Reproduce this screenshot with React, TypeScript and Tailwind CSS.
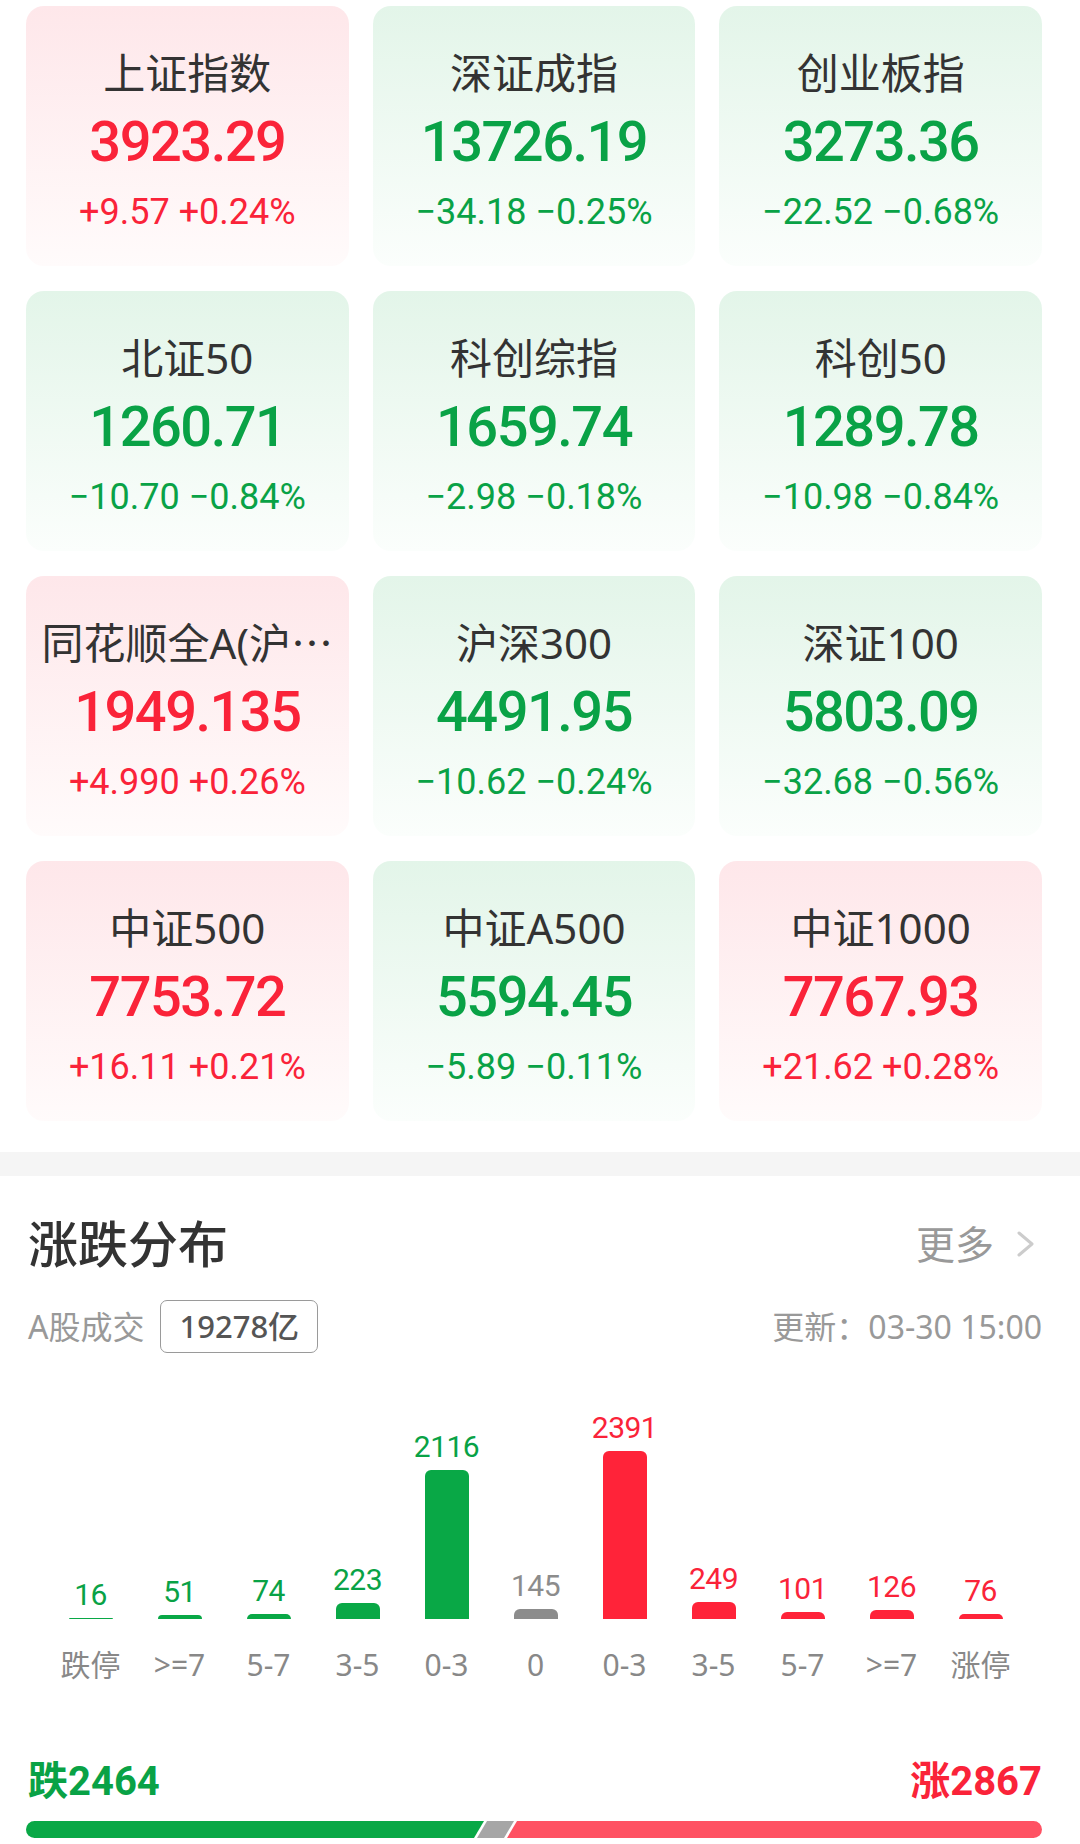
import React from "react"

type Tone = "up" | "down"

interface IndexCard {
  name: string
  price: string
  change: string
  pct: string
  tone: Tone
}

const indices: IndexCard[] = [
  { name: "上证指数", price: "3923.29", change: "+9.57", pct: "+0.24%", tone: "up" },
  { name: "深证成指", price: "13726.19", change: "−34.18", pct: "−0.25%", tone: "down" },
  { name: "创业板指", price: "3273.36", change: "−22.52", pct: "−0.68%", tone: "down" },
  { name: "北证50", price: "1260.71", change: "−10.70", pct: "−0.84%", tone: "down" },
  { name: "科创综指", price: "1659.74", change: "−2.98", pct: "−0.18%", tone: "down" },
  { name: "科创50", price: "1289.78", change: "−10.98", pct: "−0.84%", tone: "down" },
  { name: "同花顺全A(沪⋯", price: "1949.135", change: "+4.990", pct: "+0.26%", tone: "up" },
  { name: "沪深300", price: "4491.95", change: "−10.62", pct: "−0.24%", tone: "down" },
  { name: "深证100", price: "5803.09", change: "−32.68", pct: "−0.56%", tone: "down" },
  { name: "中证500", price: "7753.72", change: "+16.11", pct: "+0.21%", tone: "up" },
  { name: "中证A500", price: "5594.45", change: "−5.89", pct: "−0.11%", tone: "down" },
  { name: "中证1000", price: "7767.93", change: "+21.62", pct: "+0.28%", tone: "up" },
]

type BarTone = "down" | "flat" | "up"

const buckets: { label: string; count: number; tone: BarTone }[] = [
  { label: "跌停", count: 16, tone: "down" },
  { label: ">=7", count: 51, tone: "down" },
  { label: "5-7", count: 74, tone: "down" },
  { label: "3-5", count: 223, tone: "down" },
  { label: "0-3", count: 2116, tone: "down" },
  { label: "0", count: 145, tone: "flat" },
  { label: "0-3", count: 2391, tone: "up" },
  { label: "3-5", count: 249, tone: "up" },
  { label: "5-7", count: 101, tone: "up" },
  { label: ">=7", count: 126, tone: "up" },
  { label: "涨停", count: 76, tone: "up" },
]

const textTone = {
  down: "text-[#09a246]",
  flat: "text-[#8c8c8c]",
  up: "text-[#fa2339]",
}

const barTone = {
  down: "bg-[#09a846]",
  flat: "bg-[#8c8c8c]",
  up: "bg-[#ff2339]",
}

const numFont = "font-['Roboto','Noto_Sans',sans-serif]"

function Card({ item }: { item: IndexCard }) {
  const up = item.tone === "up"
  return (
    <div
      className={`flex h-[260px] flex-col items-center rounded-[18px] bg-linear-to-b px-[14px] pt-[38px] ${
        up ? "from-[#fee7ea] to-[#fffbfb]" : "from-[#e3f5e9] to-[#fbfefc]"
      }`}
    >
      <div className="w-full truncate text-center text-[42px] leading-[58px] text-[#333]">
        {item.name}
      </div>
      <div
        className={`mt-[6px] text-[56px] font-medium leading-[68px] tracking-[-1.5px] ${numFont} ${
          up ? "text-[#fa2339]" : "text-[#09a246]"
        }`}
      >
        {item.price}
      </div>
      <div
        className={`mt-[12px] flex gap-[9px] text-[36px] leading-[48px] ${numFont} ${
          up ? "text-[#fa2339]" : "text-[#09a246]"
        }`}
      >
        <span>{item.change}</span>
        <span>{item.pct}</span>
      </div>
    </div>
  )
}

export default function App() {
  const scale = 168 / 2391
  return (
    <div className="h-[1844px] w-[1080px] overflow-hidden bg-white font-['Noto_Sans','Noto_Sans_CJK_SC',sans-serif]">
      {/* 指数卡片 */}
      <div className="grid grid-cols-3 gap-x-[24px] gap-y-[25px] pl-[26px] pr-[38px] pt-[6px]">
        {indices.map((it) => (
          <Card key={it.name} item={it} />
        ))}
      </div>

      <div className="mt-[31px] h-[24px] bg-[#f5f5f5]" />

      {/* 涨跌分布 */}
      <div className="pl-[26px] pr-[38px] pt-[38px]">
        <div className="flex items-center justify-between">
          <h2 className="pl-[2px] text-[50px] font-medium leading-[60px] text-[#333]">涨跌分布</h2>
          <div className="flex items-center gap-[22px] pr-[6px] text-[39px] leading-[60px] text-[#999]">
            <span>更多</span>
            <svg width="20" height="26" viewBox="0 0 20 26" fill="none">
              <polyline points="3,2 16,13 3,24" stroke="#cccccc" strokeWidth="3" strokeLinecap="round" strokeLinejoin="round" />
            </svg>
          </div>
        </div>

        <div className="mt-[26px] flex items-center justify-between">
          <div className="flex items-center gap-[16px]">
            <span className="pl-[2px] text-[32px] leading-[40px] text-[#999]">A股成交</span>
            <span className="flex h-[53px] items-center rounded-[7px] border-[1.5px] border-[#9a9a9a] px-[18px] text-[31px] font-medium text-[#555]">
              19278亿
            </span>
          </div>
          <span className="text-[32px] leading-[40px] text-[#999]">更新：03-30 15:00</span>
        </div>

        {/* 柱状图 */}
        <div className="mt-[6px] grid grid-cols-11 pl-[20px] pr-[17px]">
          {buckets.map((b, i) => (
            <div key={i} className="flex h-[260px] flex-col items-center justify-end">
              <span className={`mb-[5px] text-[30px] leading-[36px] tracking-[-0.5px] ${numFont} ${textTone[b.tone]}`}>
                {b.count}
              </span>
              <div
                className={`w-[44px] rounded-t-[6px] ${barTone[b.tone]}`}
                style={{ height: Math.max(1.2, b.count * scale) }}
              />
            </div>
          ))}
        </div>
        <div className="mt-[28px] grid grid-cols-11 pl-[20px] pr-[17px]">
          {buckets.map((b, i) => (
            <span key={i} className="text-center text-[30px] leading-[36px] text-[#888]">
              {b.label}
            </span>
          ))}
        </div>

        {/* 涨跌统计 */}
        <div className="mt-[73px] flex items-center justify-between text-[40px] font-bold leading-[48px]">
          <span className="pl-[2px] text-[#09a246]">
            跌<span className={numFont}>2464</span>
          </span>
          <span className="text-[#fa2339]">
            涨<span className={numFont}>2867</span>
          </span>
        </div>
        <div className="mt-[15px] flex h-[17px] overflow-hidden rounded-full">
          <div className="h-full w-[458px] bg-[#09a846] [clip-path:polygon(0_0,100%_0,calc(100%-10px)_100%,0_100%)]" />
          <div className="-ml-[7px] h-full w-[37px] bg-[#a6a6a6] [clip-path:polygon(10px_0,100%_0,calc(100%-10px)_100%,0_100%)]" />
          <div className="-ml-[7px] h-full flex-1 bg-[#ff5263] [clip-path:polygon(10px_0,100%_0,100%_100%,0_100%)]" />
        </div>
      </div>
    </div>
  )
}
